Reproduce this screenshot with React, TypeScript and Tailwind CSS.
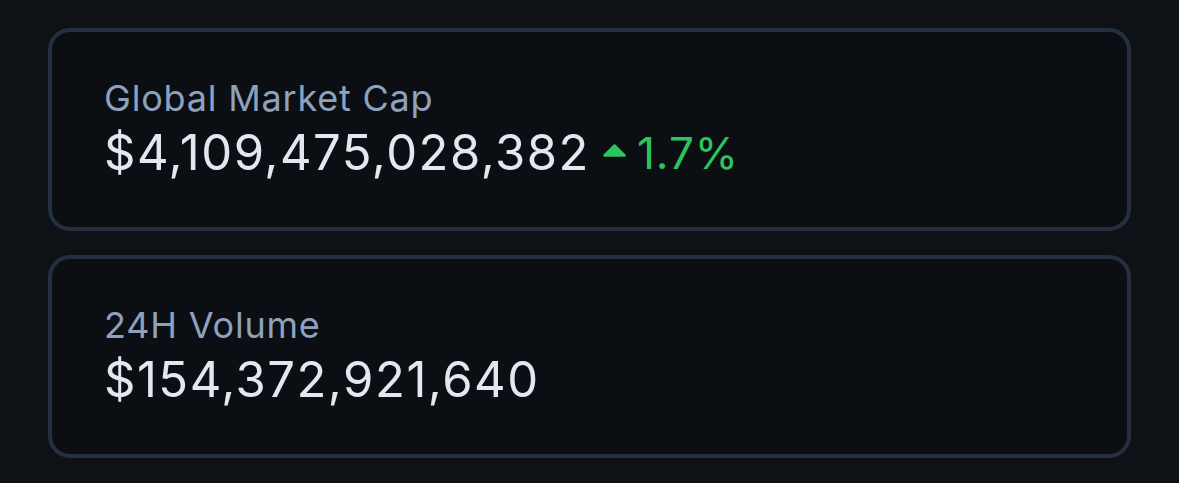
import React from "react";

function Card({ label, value, change }: { label: string; value: string; change?: string }) {
  return (
    <div className="rounded-[22px] border-[4px] border-[#243042] bg-[#0b0f13] pl-[52px] pt-[44px] h-[203px]">
      <div className="text-[36px] leading-[44px] tracking-[0.8px] text-[#8ea2bd]">{label}</div>
      <div className="flex items-center mt-[3px]">
        <span className="text-[49px] leading-[60px] tracking-[1.5px] text-[#e3e8f0]">{value}</span>
        {change && (
          <span className="flex items-center ml-[13px] text-[44px] leading-[60px] tracking-[1px] text-[#2ec45c]">
            <svg width="23" height="13" viewBox="0 0 23 13" className="mr-[11px] mt-[-5px]">
              <path d="M11.5 1.5 L21.5 11.5 L1.5 11.5 Z" fill="#2ec45c" strokeLinejoin="round" stroke="#2ec45c" strokeWidth="2.5" />
            </svg>
            {change}
          </span>
        )}
      </div>
    </div>
  );
}

export default function App() {
  return (
    <div className="w-[1179px] h-[483px] bg-[#0e1217] px-[48px] pt-[28px] flex flex-col gap-[24px]" style={{ fontFamily: "Inter, 'Noto Sans', sans-serif" }}>
      <Card label="Global Market Cap" value="$4,109,475,028,382" change="1.7%" />
      <Card label="24H Volume" value="$154,372,921,640" />
    </div>
  );
}
